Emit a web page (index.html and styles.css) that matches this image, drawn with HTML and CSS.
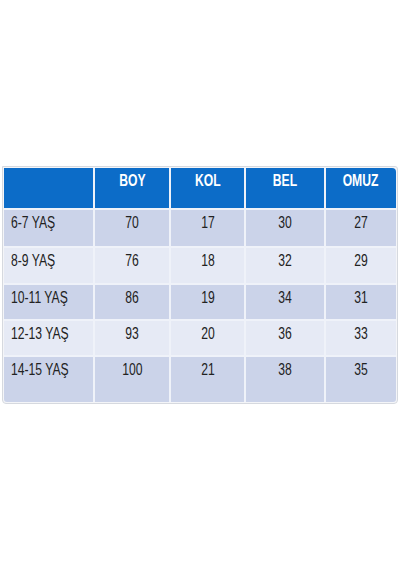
FILE: index.html
```html
<!DOCTYPE html>
<html lang="tr">
<head>
    <meta charset="UTF-8">
    <meta name="viewport" content="width=device-width, initial-scale=1.0">
    <title>Beden Tablosu</title>
    <link rel="stylesheet" href="styles.css">
</head>
<body>
    <div class="size-chart">
        <div class="size-grid">
            <div class="cell head"></div>
            <div class="cell head"><span>BOY</span></div>
            <div class="cell head"><span>KOL</span></div>
            <div class="cell head"><span>BEL</span></div>
            <div class="cell head"><span>OMUZ</span></div>

            <div class="cell label dark"><span>6-7 YAŞ</span></div>
            <div class="cell dark"><span>70</span></div>
            <div class="cell dark"><span>17</span></div>
            <div class="cell dark"><span>30</span></div>
            <div class="cell dark"><span>27</span></div>

            <div class="cell label light"><span>8-9 YAŞ</span></div>
            <div class="cell light"><span>76</span></div>
            <div class="cell light"><span>18</span></div>
            <div class="cell light"><span>32</span></div>
            <div class="cell light"><span>29</span></div>

            <div class="cell label dark"><span>10-11 YAŞ</span></div>
            <div class="cell dark"><span>86</span></div>
            <div class="cell dark"><span>19</span></div>
            <div class="cell dark"><span>34</span></div>
            <div class="cell dark"><span>31</span></div>

            <div class="cell label light"><span>12-13 YAŞ</span></div>
            <div class="cell light"><span>93</span></div>
            <div class="cell light"><span>20</span></div>
            <div class="cell light"><span>36</span></div>
            <div class="cell light"><span>33</span></div>

            <div class="cell label dark"><span>14-15 YAŞ</span></div>
            <div class="cell dark"><span>100</span></div>
            <div class="cell dark"><span>21</span></div>
            <div class="cell dark"><span>38</span></div>
            <div class="cell dark"><span>35</span></div>
        </div>
    </div>
</body>
</html>
```

FILE: styles.css
```css
:root {
    --head-bg: #0c6cc8;
    --row-dark: #cbd3e9;
    --row-light: #e6eaf5;
    --grid-line: #eff2f9;
    --text-color: #222222;
}

* {
    box-sizing: border-box;
    margin: 0;
    padding: 0;
}

body {
    background-color: #ffffff;
    font-family: "Liberation Sans", Arial, sans-serif;
    font-size: 16px;
    line-height: 17px;
    color: var(--text-color);
}

.size-chart {
    width: 396px;
    margin: 166px 0 0 2px;
    padding: 1px;
    border: 1px solid #d6d9df;
    border-radius: 0 3px 4px 4px;
    background-color: #f4f5f8;
}

.size-grid {
    display: grid;
    grid-template-columns: 89px 74px 73px 78px 70px;
    grid-template-rows: 40px 36px 35px 34px 34px 45px;
    gap: 2px;
    background-color: var(--grid-line);
    border-radius: 0 4px 3px 3px;
    overflow: hidden;
}

/* the reference uses a condensed face, so squeeze the regular one */
.cell span {
    display: inline-block;
    transform: scaleX(0.76);
    transform-origin: center;
    white-space: nowrap;
}

.cell {
    padding-top: 4px;
    text-align: center;
}

.head {
    background-color: var(--head-bg);
    color: #ffffff;
    font-weight: bold;
}

.dark {
    background-color: var(--row-dark);
}

.light {
    background-color: var(--row-light);
}

.label {
    text-align: left;
    padding-left: 7px;
}

.label span {
    transform-origin: left;
}
```
